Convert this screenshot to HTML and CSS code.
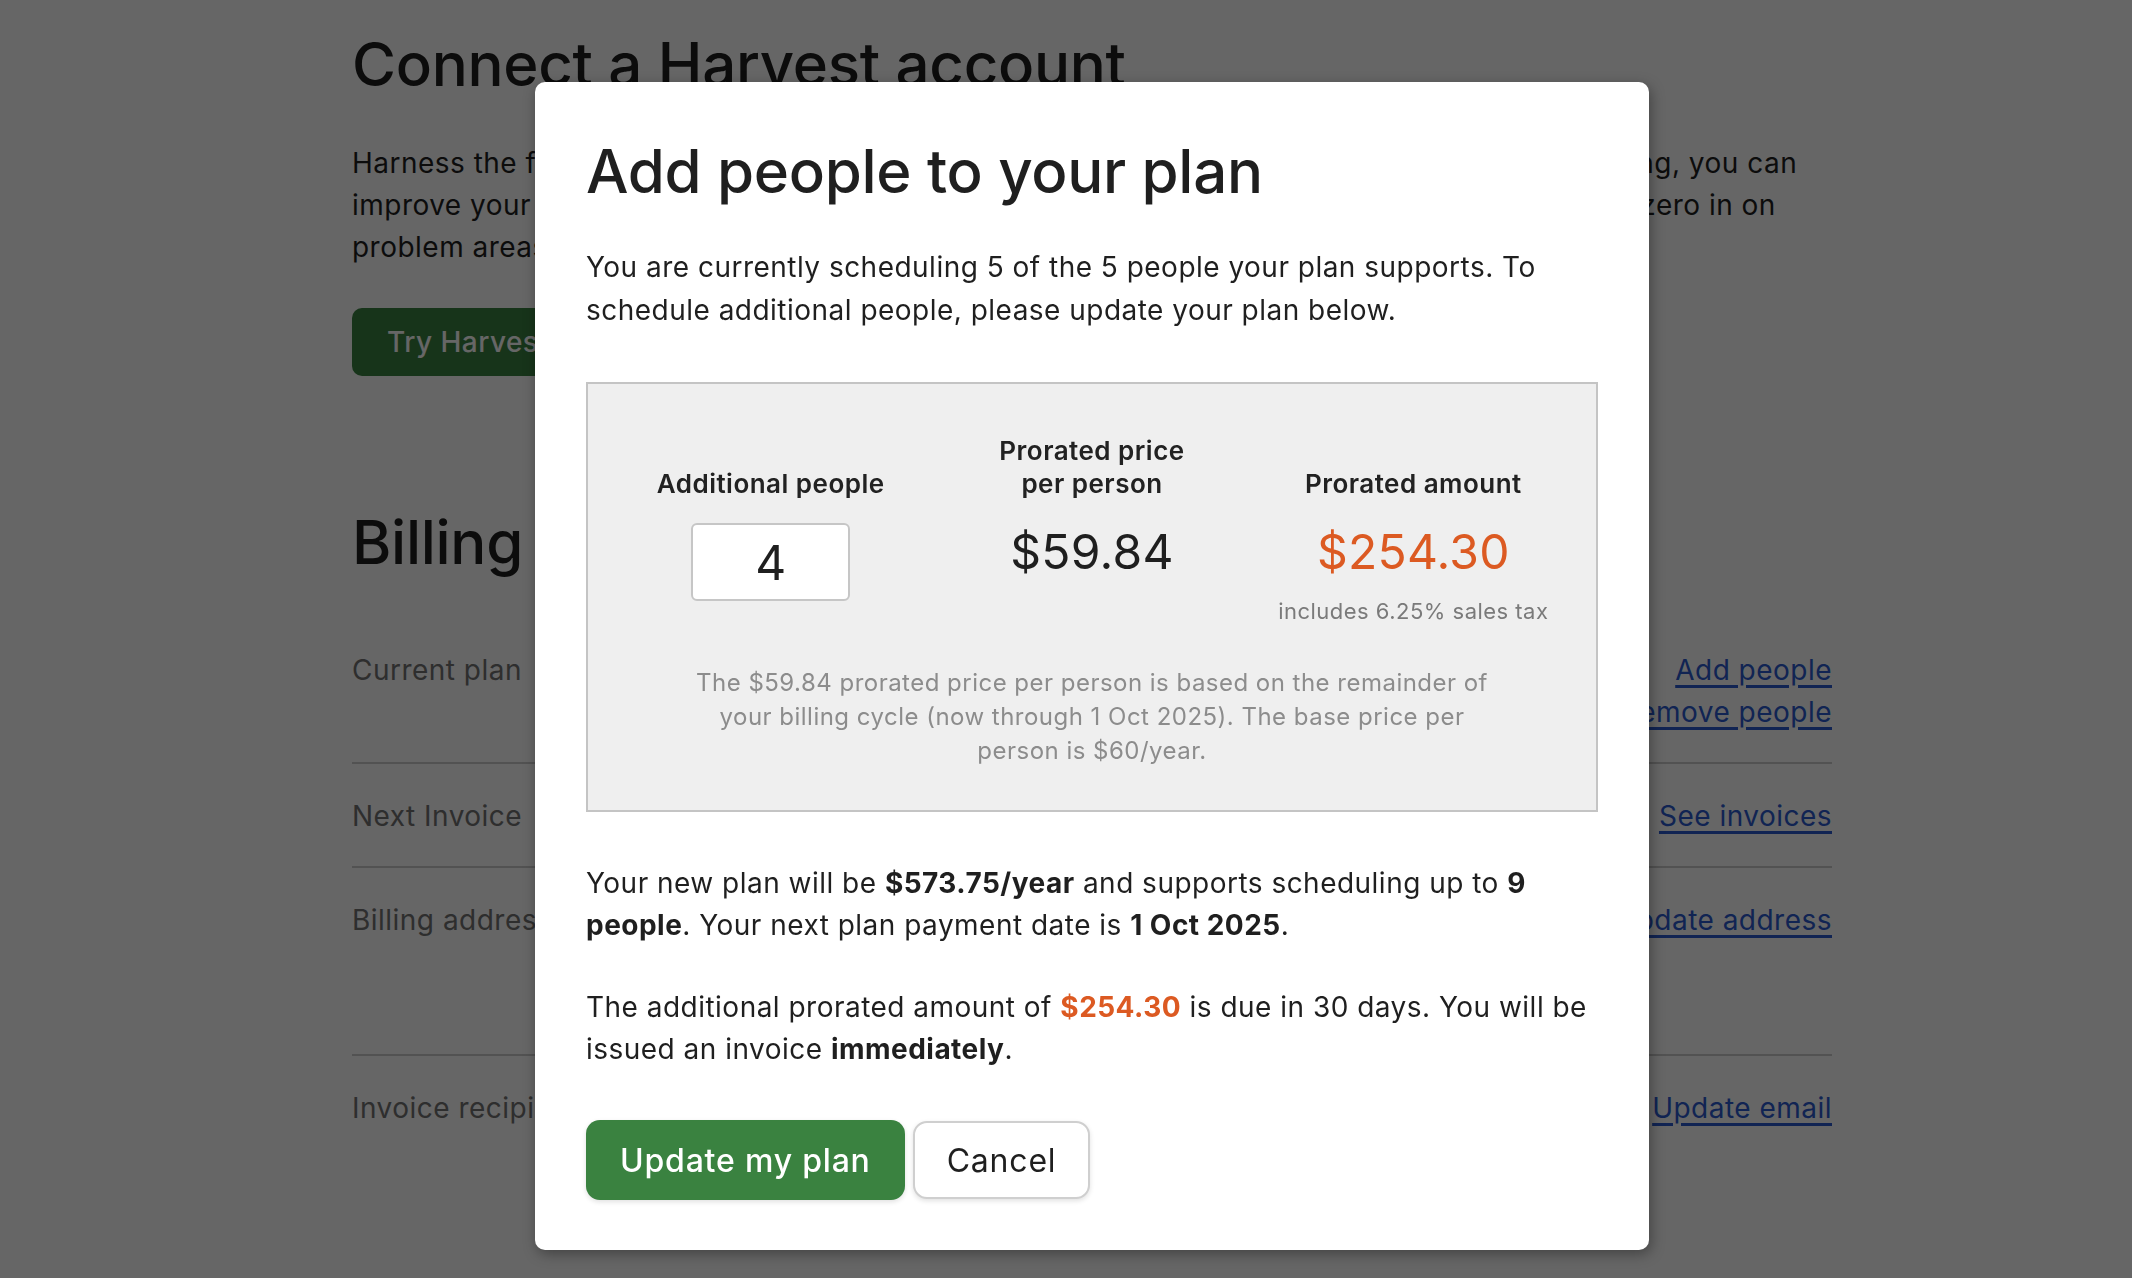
FILE: index.html
```html
<!DOCTYPE html>
<html lang="en">
<head>
<meta charset="utf-8">
<title>Billing – Add people to your plan</title>
<link rel="stylesheet" href="styles.css">
</head>
<body>
<div class="page">
  <section class="harvest">
    <h1 class="page-title">Connect a Harvest account</h1>
    <p class="lead">Harness the full power of Float and Harvest together: by pairing your planning with time tracking, you can<br>improve your estimates, compare scheduled hours with logged hours, spot trends earlier, and zero in on<br>problem areas before they turn into bigger issues.</p>
    <div class="cta"><a class="btn-harvest" href="#">Try Harvest integration</a></div>
  </section>

  <section class="billing">
    <h2 class="page-title billing-title">Billing</h2>
    <div class="row">
      <div class="row-label">Current plan</div>
      <div class="row-value">Pro plan · 5 people<br>$300/year</div>
      <div class="row-actions"><a href="#">Add people</a><a href="#">Remove people</a></div>
    </div>
    <div class="row">
      <div class="row-label">Next Invoice</div>
      <div class="row-value">1 Oct 2025</div>
      <div class="row-actions"><a href="#">See invoices</a></div>
    </div>
    <div class="row">
      <div class="row-label">Billing address</div>
      <div class="row-value">Float Schedule Inc.<br>120 Main Street<br>Boston, MA 02110</div>
      <div class="row-actions"><a href="#">Update address</a></div>
    </div>
    <div class="row row-last">
      <div class="row-label">Invoice recipient</div>
      <div class="row-value">billing@example.com</div>
      <div class="row-actions"><a href="#">Update email</a></div>
    </div>
  </section>
</div>

<div class="overlay"></div>

<div class="modal" role="dialog" aria-labelledby="modal-title">
  <h3 class="modal-title" id="modal-title">Add people to your plan</h3>
  <p class="modal-intro">You are currently scheduling 5 of the 5 people your plan supports. To schedule additional people, please update your plan below.</p>

  <div class="calc">
    <div class="calc-grid">
      <div class="calc-head">Additional people</div>
      <div class="calc-head">Prorated price<br>per person</div>
      <div class="calc-head">Prorated amount</div>

      <div class="calc-cell"><input class="qty" type="text" value="4"></div>
      <div class="calc-cell"><div class="price">$59.84</div></div>
      <div class="calc-cell">
        <div class="price price-total">$254.30</div>
        <div class="tax">includes 6.25% sales tax</div>
      </div>
    </div>
    <p class="calc-note">The $59.84 prorated price per person is based on the remainder of<br>your billing cycle (now through 1 Oct 2025). The base price per<br>person is $60/year.</p>
  </div>

  <p class="summary">Your new plan will be <strong>$573.75/year</strong> and supports scheduling up to <strong>9 people</strong>. Your next plan payment date is <strong>1 Oct 2025</strong>.</p>
  <p class="summary summary-next">The additional prorated amount of <strong class="accent">$254.30</strong> is due in 30 days. You will be issued an invoice <strong>immediately</strong>.</p>

  <div class="modal-actions">
    <button class="btn btn-primary" type="button">Update my plan</button>
    <button class="btn btn-secondary" type="button">Cancel</button>
  </div>
</div>
</body>
</html>
```

FILE: styles.css
```css
* { box-sizing: border-box; }

html, body {
  margin: 0;
  padding: 0;
}

body {
  width: 2132px;
  height: 1278px;
  overflow: hidden;
  background: #ffffff;
  color: #1f1f1f;
  font-family: Inter, "Noto Sans", "Liberation Sans", sans-serif;
  letter-spacing: 0.03em;
}

/* ---------- background page ---------- */
.page {
  width: 1480px;
  margin-left: 352px;
  padding-top: 29px;
}

.page-title {
  margin: 0;
  font-size: 60px;
  line-height: 70px;
  font-weight: 500;
  letter-spacing: -0.005em;
  color: #1f1f1f;
}

.lead {
  margin: 43px 0 0;
  font-size: 28px;
  line-height: 42px;
  color: #1f1f1f;
}

.cta {
  margin-top: 40px;
}

.btn-harvest {
  display: inline-block;
  height: 68px;
  line-height: 68px;
  padding: 0 35px;
  border-radius: 10px;
  background: #3a8241;
  color: #ffffff;
  font-size: 28px;
  font-weight: 500;
  text-decoration: none;
}

.billing-title {
  margin: 131px 0 41px;
}

.row {
  display: grid;
  grid-template-columns: 360px 1fr auto;
  padding: 31px 0 29px;
  border-bottom: 2px solid #cccccc;
  font-size: 28px;
  line-height: 42px;
}

.row-last {
  border-bottom: none;
}

.row-label {
  color: #737373;
}

.row-value {
  color: #1f1f1f;
}

.row-actions {
  display: flex;
  flex-direction: column;
  align-items: flex-end;
}

.row-actions a {
  color: #2c5bd0;
  text-decoration: underline;
  text-decoration-thickness: 3px;
  text-underline-offset: 5px;
}

/* ---------- overlay + modal ---------- */
.overlay {
  position: fixed;
  inset: 0;
  background: rgba(0, 0, 0, 0.6);
}

.modal {
  position: absolute;
  left: 535px;
  top: 82px;
  width: 1114px;
  padding: 54px 51px 50px;
  background: #ffffff;
  border-radius: 10px;
  box-shadow: 2px 4px 14px rgba(0, 0, 0, 0.35);
}

.modal-title {
  margin: 0;
  font-size: 60px;
  line-height: 70px;
  font-weight: 500;
  letter-spacing: -0.005em;
  color: #1f1f1f;
}

.modal-intro {
  margin: 40px 0 0;
  font-size: 28px;
  line-height: 43px;
}

.calc {
  margin-top: 50px;
  padding: 50px 22px 42px;
  background: #efefef;
  border: 2px solid #c4c4c4;
}

.calc-grid {
  display: grid;
  grid-template-columns: repeat(3, 1fr);
  row-gap: 23px;
  text-align: center;
}

.calc-head {
  align-self: end;
  font-size: 26px;
  line-height: 33px;
  font-weight: 600;
  color: #222222;
}

.calc-cell {
  display: flex;
  flex-direction: column;
  align-items: center;
}

.qty {
  width: 159px;
  height: 78px;
  padding: 0;
  border: 2px solid #c6c6c6;
  border-radius: 6px;
  background: #ffffff;
  color: #1f1f1f;
  font-family: inherit;
  font-size: 48px;
  text-align: center;
}

.price {
  padding-top: 1px;
  font-size: 48px;
  line-height: 56px;
  letter-spacing: 0.005em;
  color: #1f1f1f;
}

.price-total {
  color: #dc5a22;
}

.tax {
  margin-top: 17px;
  font-size: 22px;
  line-height: 28px;
  color: #7a7a7a;
}

.calc-note {
  margin: 41px 0 0;
  font-size: 24px;
  line-height: 34px;
  color: #8c8c8c;
  text-align: center;
}

.summary {
  margin: 50px 0 0;
  font-size: 28px;
  line-height: 42px;
}

.summary-next {
  margin-top: 40px;
}

.summary strong {
  font-weight: 700;
}

.summary .accent {
  color: #dc5a22;
}

.modal-actions {
  display: flex;
  align-items: center;
  gap: 8px;
  margin-top: 50px;
}

.btn {
  font-family: inherit;
  font-size: 32px;
  letter-spacing: 0.025em;
  border-radius: 14px;
  cursor: pointer;
  box-shadow: 0 2px 5px rgba(0, 0, 0, 0.12);
}

.btn-primary {
  height: 80px;
  padding: 0 34px;
  border: none;
  background: #3a8240;
  color: #ffffff;
  font-weight: 500;
}

.btn-secondary {
  height: 78px;
  padding: 0 32px;
  border: 2px solid #cfcfcf;
  background: #ffffff;
  color: #1f1f1f;
  font-weight: 400;
}
```
